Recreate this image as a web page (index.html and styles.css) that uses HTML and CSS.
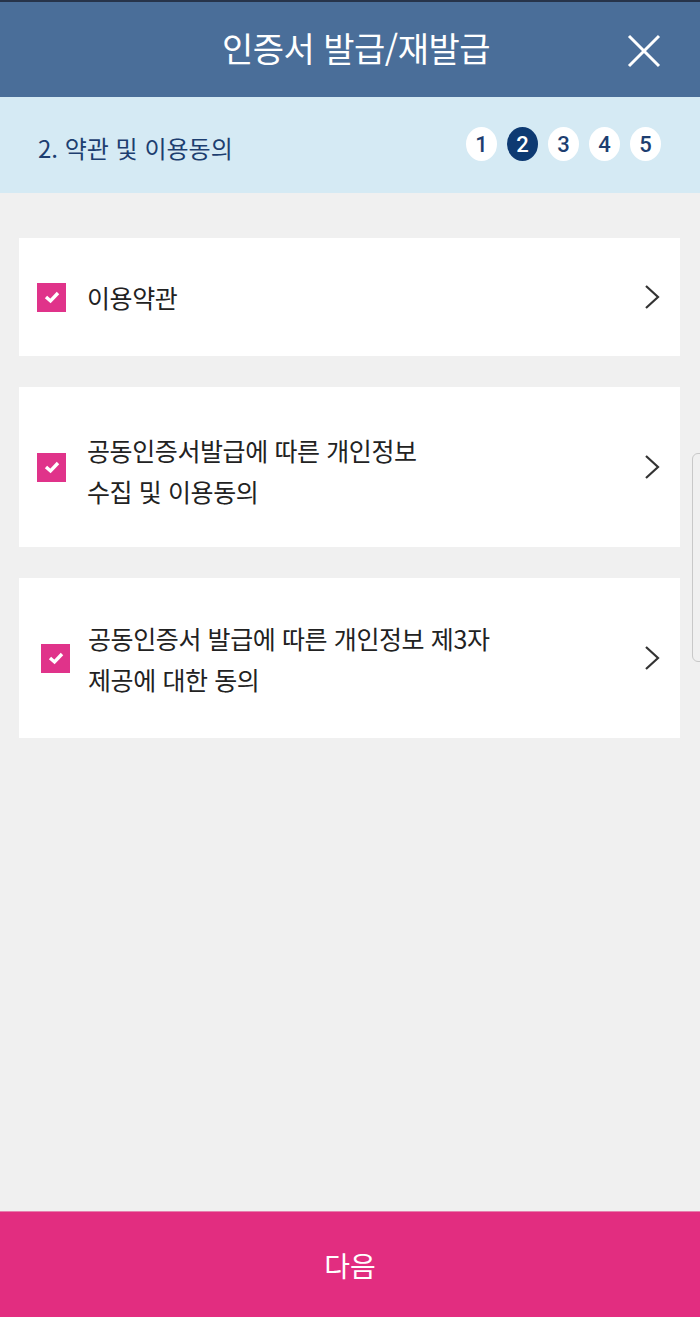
FILE: index.html
```html
<!DOCTYPE html>
<html lang="ko">
<head>
    <meta charset="UTF-8">
    <meta name="viewport" content="width=device-width, initial-scale=1.0">
    <title>인증서 발급/재발급</title>
    <link rel="stylesheet" href="styles.css">
</head>
<body>

<div class="tela">
    <!-- Cabeçalho -->
    <div class="topo">
        <h1>인증서 발급/재발급</h1>
        <button class="fechar" aria-label="닫기">
            <svg width="34" height="34" viewBox="0 0 34 34"><path d="M2 2 L32 32 M32 2 L2 32" stroke="#fff" stroke-width="3" fill="none"/></svg>
        </button>
    </div>

    <!-- Etapas -->
    <div class="etapas">
        <span class="etapa-titulo">2. 약관 및 이용동의</span>
        <div class="passos">
            <span class="passo">1</span>
            <span class="passo ativo">2</span>
            <span class="passo">3</span>
            <span class="passo">4</span>
            <span class="passo">5</span>
        </div>
    </div>

    <!-- Lista de termos -->
    <div class="conteudo">
        <div class="termo termo-curto">
            <span class="check"><svg width="18" height="14" viewBox="0 0 18 14"><path d="M3 7 L7.5 11 L15 3" stroke="#fff" stroke-width="3.4" fill="none"/></svg></span>
            <p>이용약관</p>
            <svg class="seta" width="16" height="26" viewBox="0 0 16 26"><path d="M2 2 L14 13 L2 24" stroke="#333" stroke-width="2.2" fill="none"/></svg>
        </div>
        <div class="termo termo-2">
            <span class="check"><svg width="18" height="14" viewBox="0 0 18 14"><path d="M3 7 L7.5 11 L15 3" stroke="#fff" stroke-width="3.4" fill="none"/></svg></span>
            <p>공동인증서발급에 따른 개인정보<br>수집 및 이용동의</p>
            <svg class="seta" width="16" height="26" viewBox="0 0 16 26"><path d="M2 2 L14 13 L2 24" stroke="#333" stroke-width="2.2" fill="none"/></svg>
        </div>
        <div class="termo termo-3">
            <span class="check"><svg width="18" height="14" viewBox="0 0 18 14"><path d="M3 7 L7.5 11 L15 3" stroke="#fff" stroke-width="3.4" fill="none"/></svg></span>
            <p>공동인증서 발급에 따른 개인정보 제3자<br>제공에 대한 동의</p>
            <svg class="seta" width="16" height="26" viewBox="0 0 16 26"><path d="M2 2 L14 13 L2 24" stroke="#333" stroke-width="2.2" fill="none"/></svg>
        </div>
        <div class="rolagem"></div>
    </div>

    <button class="proximo">다음</button>
</div>

</body>
</html>
```

FILE: styles.css
```css
body {
    margin: 0;
    padding: 0;
    font-family: "Noto Sans CJK KR", "Noto Sans", sans-serif;
    background-color: #f0f0f0;
}
.tela {
    height: 1317px;
    display: flex;
    flex-direction: column;
}
.topo {
    height: 95px;
    background-color: #4a6e99;
    border-top: 2px solid #27344a;
    display: flex;
    align-items: center;
    justify-content: center;
    position: relative;
}
.topo h1 {
    margin: 0 0 4px 12px;
    color: #fff;
    font-size: 34px;
    font-weight: 400;
    letter-spacing: -0.5px;
}
.fechar {
    position: absolute;
    right: 39px;
    top: 32px;
    background: none;
    border: none;
    padding: 0;
    line-height: 0;
}
.etapas {
    height: 96px;
    background-color: #d5eaf4;
    display: flex;
    align-items: center;
    justify-content: space-between;
    padding: 0 39px 0 38px;
}
.etapa-titulo {
    color: #1d3e70;
    font-size: 24px;
    margin-top: 4px;
}
.passos {
    display: flex;
    gap: 10px;
    margin-bottom: 2px;
}
.passo {
    width: 31px;
    height: 34px;
    border-radius: 50%;
    background-color: #fff;
    color: #1d3e70;
    font-family: Roboto, sans-serif;
    font-size: 22px;
    font-weight: 500;
    display: flex;
    align-items: center;
    justify-content: center;
}
.passo.ativo {
    background-color: #0e3a72;
    color: #fff;
}
.conteudo {
    flex: 1;
    padding: 45px 20px 0 19px;
    display: flex;
    flex-direction: column;
    gap: 31px;
    position: relative;
}
.termo {
    background-color: #fff;
    height: 160px;
    display: flex;
    align-items: center;
    padding: 0 20px 0 18px;
}
.termo-curto {
    height: 118px;
}
.termo p {
    flex: 1;
    margin: 0 0 0 21px;
    font-size: 25px;
    line-height: 41px;
    color: #222;
    letter-spacing: -0.4px;
}
.termo-2 p {
    margin-top: 8px;
}
.termo-3 {
    padding-left: 22px;
}
.termo-3 p {
    margin-left: 18px;
    margin-top: 2px;
}
.check {
    width: 29px;
    height: 29px;
    background-color: #e0338a;
    display: flex;
    align-items: center;
    justify-content: center;
}
.rolagem {
    position: absolute;
    right: -8px;
    top: 260px;
    width: 14px;
    height: 207px;
    border: 1px solid #c8c8c8;
    border-radius: 6px;
    background-color: #f0f0f0;
}
.proximo {
    height: 106px;
    border: none;
    border-top: 1px solid #e67fae;
    background-color: #e22d80;
    color: #fff;
    font-family: "Noto Sans CJK KR", sans-serif;
    font-size: 28px;
    width: 100%;
    padding: 0;
}
```
